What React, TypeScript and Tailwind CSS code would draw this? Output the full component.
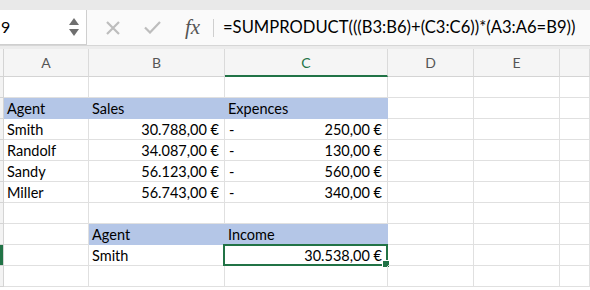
import React from 'react';

const font = { fontFamily: 'Lato, "Open Sans", sans-serif' };

type Cell = {
  text?: string;
  align?: 'left' | 'right';
  fill?: boolean;
  dash?: boolean;
  selected?: boolean;
};

const colWidths = ['w-[85px]', 'w-[136px]', 'w-[163px]', 'w-[86px]', 'w-[86px]', 'flex-1'];

const rows: Cell[][] = [
  [],
  [{ text: 'Agent', fill: true }, { text: 'Sales', fill: true }, { text: 'Expences', fill: true }],
  [{ text: 'Smith' }, { text: '30.788,00 €', align: 'right' }, { text: '250,00 €', align: 'right', dash: true }],
  [{ text: 'Randolf' }, { text: '34.087,00 €', align: 'right' }, { text: '130,00 €', align: 'right', dash: true }],
  [{ text: 'Sandy' }, { text: '56.123,00 €', align: 'right' }, { text: '560,00 €', align: 'right', dash: true }],
  [{ text: 'Miller' }, { text: '56.743,00 €', align: 'right' }, { text: '340,00 €', align: 'right', dash: true }],
  [],
  [{}, { text: 'Agent', fill: true }, { text: 'Income', fill: true }],
  [{}, { text: 'Smith' }, { text: '30.538,00 €', align: 'right', selected: true }],
  [],
];

const GridRow: React.FC<{ cells: Cell[]; active?: boolean }> = ({ cells, active }) => (
  <div className="flex h-[21px]">
    <div className={`w-[4px] shrink-0 border-r border-b border-[#d4d4d4] ${active ? 'bg-[#217346]' : 'bg-[#f3f3f3]'}`} />
    {colWidths.map((w, i) => {
      const c = cells[i] || {};
      return (
        <div
          key={i}
          className={`${w} shrink-0 relative flex items-center px-[3px] pt-[2px] text-[14.5px] text-black border-b border-r ${
            c.fill ? 'bg-[#b4c6e7] border-[#b4c6e7]' : 'border-[#e0e0e0]'
          } ${c.align === 'right' ? 'justify-end pr-[5px]' : ''}`}
        >
          {c.dash && <span className="absolute left-[4px]">-</span>}
          {c.text}
          {c.selected && (
            <>
              <div className="absolute -left-[2px] -top-[1px] -right-[1px] -bottom-[1px] border-2 border-[#217346]" />
              <div className="absolute -right-[3px] -bottom-[3px] w-[6px] h-[6px] bg-[#217346] border border-white box-content" />
            </>
          )}
        </div>
      );
    })}
  </div>
);

const App: React.FC = () => {
  const headers = ['A', 'B', 'C', 'D', 'E', ''];
  return (
    <div className="w-[590px] h-[290px] overflow-hidden bg-white" style={font}>
      <div className="h-[10px] bg-[#e9e9e9]" />
      <div className="flex h-[36px] bg-[#fafafa] border-b border-[#d6d6d6]">
        <div className="w-[87px] flex items-center justify-between bg-white border-r border-b border-[#cfcfcf] pr-[7px]">
          <span className="text-[16px] text-black pl-px">9</span>
          <div className="flex flex-col gap-[4px]">
            <svg width="10" height="7" viewBox="0 0 10 7"><path d="M5 0 L10 7 L0 7 Z" fill="#6f6f6f" /></svg>
            <svg width="10" height="7" viewBox="0 0 10 7"><path d="M0 0 L10 0 L5 7 Z" fill="#6f6f6f" /></svg>
          </div>
        </div>
        <div className="flex items-center w-[126px] pl-[19px] gap-[24px]">
          <svg width="14" height="14" viewBox="0 0 14 14"><path d="M1 1 L13 13 M13 1 L1 13" stroke="#bdbdbd" strokeWidth="2.2" /></svg>
          <svg width="17" height="13" viewBox="0 0 17 13"><path d="M1 6.5 L6 11.5 L16 1" stroke="#bdbdbd" strokeWidth="2.2" fill="none" /></svg>
          <span className="text-[21px] italic text-[#555] leading-none" style={{ fontFamily: '"Liberation Serif", serif' }}>fx</span>
        </div>
        <div className="w-px h-[18px] self-center bg-[#cfcfcf]" />
        <div className="flex items-center pl-[9px] text-[16.6px] text-black whitespace-nowrap">
          =SUMPRODUCT(((B3:B6)+(C3:C6))*(A3:A6=B9))
        </div>
      </div>
      <div className="h-[3px] bg-[#ececec]" />
      <div className="flex h-[28px] bg-[#f5f5f5]">
        <div className="w-[4px] shrink-0 border-r border-b border-[#d4d4d4]" />
        {headers.map((h, i) => (
          <div
            key={i}
            className={`${colWidths[i]} shrink-0 flex items-center justify-center text-[14px] border-r border-[#dadada] ${
              h === 'C' ? 'text-[#217346] border-b-2 border-b-[#217346]' : 'text-[#555] border-b border-b-[#d4d4d4]'
            }`}
          >
            {h}
          </div>
        ))}
      </div>
      {rows.map((r, i) => (
        <GridRow key={i} cells={r} active={i === 8} />
      ))}
    </div>
  );
};

export default App;
